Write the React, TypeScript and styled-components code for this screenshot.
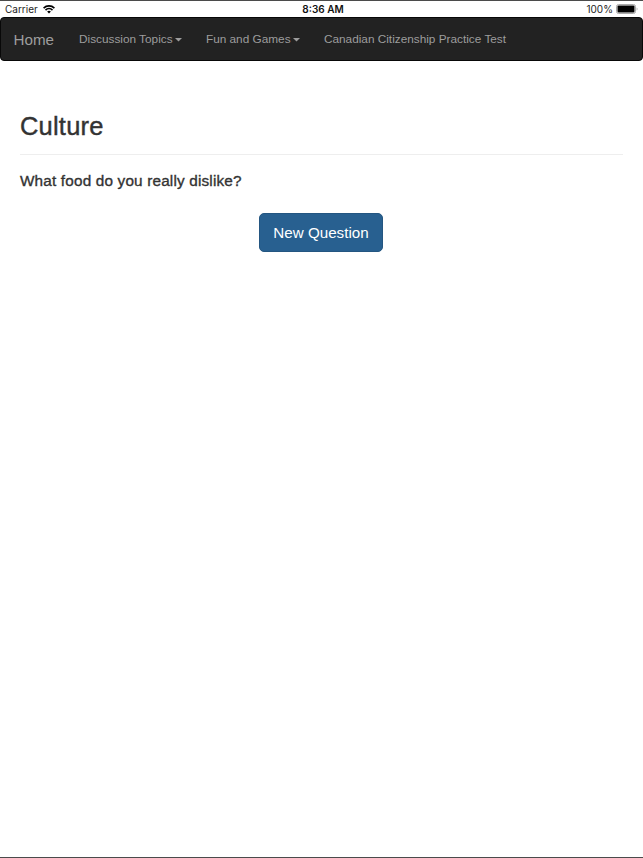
import React from "react";
import styled, { createGlobalStyle } from "styled-components";

const Global = createGlobalStyle`
  *{box-sizing:border-box}
  body{margin:0;background:#fff;color:#333;font-family:"Liberation Sans",Arial,sans-serif}
`;
const Screen = styled.div`
  height:858px;border-top:1px solid #4b4b4b;border-bottom:1px solid #4b4b4b;overflow:hidden;
`;
const StatusBar = styled.header`
  height:16px;display:grid;grid-template-columns:1fr auto 1fr;align-items:center;
  padding:0 5px;color:#1c1c1c;font:10px/16px Inter,sans-serif;
`;
const Side = styled.div<{ $end?: boolean }>`
  display:flex;align-items:center;gap:${p => (p.$end ? 3 : 5)}px;
  justify-content:${p => (p.$end ? "flex-end" : "flex-start")};
`;
const Time = styled.span`font-weight:600;padding-left:3px;color:#111;`;
const Nav = styled.nav`
  height:44px;background:#222;border:1px solid #080808;border-radius:4px;
  display:flex;align-items:center;padding-left:12.5px;color:#9d9d9d;
`;
const Brand = styled.a`font-size:15.2px;margin-right:25px;`;
const NavItem = styled.a`
  font-size:11.8px;display:flex;align-items:center;gap:2px;margin-right:24.4px;white-space:nowrap;
`;
const CaretIcon = styled.svg`width:7px;height:4px;margin-top:1px;fill:#9d9d9d;`;
const Main = styled.main`padding:49px 20px 0;`;
const Title = styled.h1`
  margin:0;height:45px;font-size:25.5px;line-height:32px;font-weight:400;letter-spacing:.2px;
  -webkit-text-stroke:.4px #333;border-bottom:1px solid #eee;
`;
const Question = styled.h2`
  margin:15px 0 0;font-size:15.3px;line-height:21px;font-weight:400;letter-spacing:.18px;
  -webkit-text-stroke:.35px #333;
`;
const Actions = styled.div`display:flex;justify-content:center;margin-top:22px;padding-right:1px;`;
const Button = styled.button`
  width:124px;height:39px;padding:0;border:1px solid #245681;border-radius:5px;background:#286090;
  color:#fff;font:15.2px "Liberation Sans",Arial,sans-serif;
`;

const Caret = () => (
  <CaretIcon viewBox="0 0 7 4">
    <path d="M0 0h7L3.5 3.6z" />
  </CaretIcon>
);

export default function App() {
  return (
    <Screen>
      <Global />
      <StatusBar>
        <Side>
          Carrier
          <svg width="12" height="9" viewBox="0 0 12 9" fill="none" stroke="#000" strokeWidth="1.6">
            <path d="M.6 3.1a7.7 7.7 0 0 1 10.8 0M2.5 5.1a5 5 0 0 1 7 0" />
            <path d="M4.1 6.6a2.7 2.7 0 0 1 3.8 0L6 8.5z" fill="#000" stroke="none" />
          </svg>
        </Side>
        <Time>8:36 AM</Time>
        <Side $end>
          100%
          <svg width="22" height="10" viewBox="0 0 22 10">
            <rect x=".5" y=".5" width="19" height="9" rx="2" fill="#fff" stroke="#aaa" />
            <rect x="1.5" y="1.5" width="17" height="7" rx="1" />
            <path d="M20.7 3.5c1 .4 1 2.6 0 3z" fill="#999" />
          </svg>
        </Side>
      </StatusBar>
      <Nav>
        <Brand>Home</Brand>
        <NavItem>Discussion Topics<Caret /></NavItem>
        <NavItem>Fun and Games<Caret /></NavItem>
        <NavItem>Canadian Citizenship Practice Test</NavItem>
      </Nav>
      <Main>
        <Title>Culture</Title>
        <Question>What food do you really dislike?</Question>
        <Actions><Button>New Question</Button></Actions>
      </Main>
    </Screen>
  );
}
